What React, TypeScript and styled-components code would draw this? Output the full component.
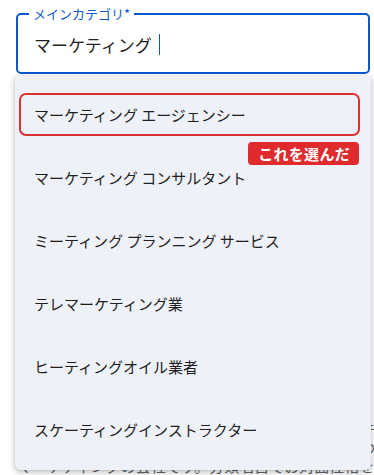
import React from "react";
import styled, { createGlobalStyle } from "styled-components";

const Global = createGlobalStyle`
  html, body { margin: 0; padding: 0; background: #ffffff; }
  body { font-family: "Noto Sans CJK JP", "Noto Sans", sans-serif; overflow: hidden; }
`;

const Page = styled.div`
  position: relative;
  width: 374px;
  height: 475px;
  padding: 7px 4px 0 16px;
  box-sizing: border-box;
  overflow: hidden;
`;

const Field = styled.fieldset`
  margin: 0;
  padding: 0 0 5px 16px;
  border: 2px solid #0b57d0;
  border-radius: 5px;
  min-width: 0;
`;

const Legend = styled.legend`
  margin-left: -5px;
  padding: 0 4px;
  font-size: 13px;
  line-height: 14px;
  color: #0b57d0;
`;

const InputRow = styled.div`
  display: flex;
  align-items: center;
  height: 46px;
  font-size: 17px;
  color: #1f1f1f;
`;

const Caret = styled.span`
  display: inline-block;
  width: 1.5px;
  height: 21px;
  margin-left: 7px;
  background: #0b57d0;
`;

const Behind = styled.div`
  margin: 347px 0 0 1px;
  font-size: 15px;
  line-height: 18px;
  color: #5f6368;
  white-space: nowrap;
`;

const Menu = styled.ul`
  position: absolute;
  top: 76px;
  left: 15px;
  width: 356px;
  height: 394px;
  margin: 0;
  padding: 7px 0 9px;
  box-sizing: border-box;
  list-style: none;
  background: #eef1f8;
  border-radius: 0 0 5px 5px;
  box-shadow: 0 2px 6px rgba(0, 0, 0, 0.28), 0 0 1px rgba(0, 0, 0, 0.2);
`;

const Item = styled.li`
  display: flex;
  height: 63px;
  padding: 10px 11px 10px 4px;
  box-sizing: border-box;
`;

const ItemBox = styled.div<{ $selected?: boolean }>`
  flex: 1;
  display: flex;
  align-items: center;
  padding: 0 13px;
  border: 2px solid ${(p) => (p.$selected ? "#dc3034" : "transparent")};
  border-radius: 7px;
  font-size: 15px;
  color: #1f1f1f;
  white-space: nowrap;
`;

const Badge = styled.span`
  position: absolute;
  top: 66px;
  right: 12px;
  height: 23px;
  padding: 0 9px 0 10px;
  display: flex;
  align-items: center;
  background: #df2a2e;
  border-radius: 4px;
  color: #ffffff;
  font-size: 15px;
  font-weight: 700;
  letter-spacing: 0.3px;
`;

const items = [
  "マーケティング エージェンシー",
  "マーケティング コンサルタント",
  "ミーティング プランニング サービス",
  "テレマーケティング業",
  "ヒーティングオイル業者",
  "スケーティングインストラクター",
];

export default function App() {
  return (
    <>
      <Global />
      <Page>
        <Field>
          <Legend>メインカテゴリ*</Legend>
          <InputRow>
            マーケティング
            <Caret />
          </InputRow>
        </Field>
        <Behind>
          <div>ビジネスのカテゴリを選択してください。メインカテゴリを前</div>
          <div>面に表示します。カテゴリはお客様がビジネスを見つけやすくに</div>
          <div>マーケティングの会社です。分類名目でお対面性格をお伝えします</div>
        </Behind>
        <Menu>
          {items.map((t, i) => (
            <Item key={t}>
              <ItemBox $selected={i === 0}>{t}</ItemBox>
            </Item>
          ))}
          <Badge>これを選んだ</Badge>
        </Menu>
      </Page>
    </>
  );
}
